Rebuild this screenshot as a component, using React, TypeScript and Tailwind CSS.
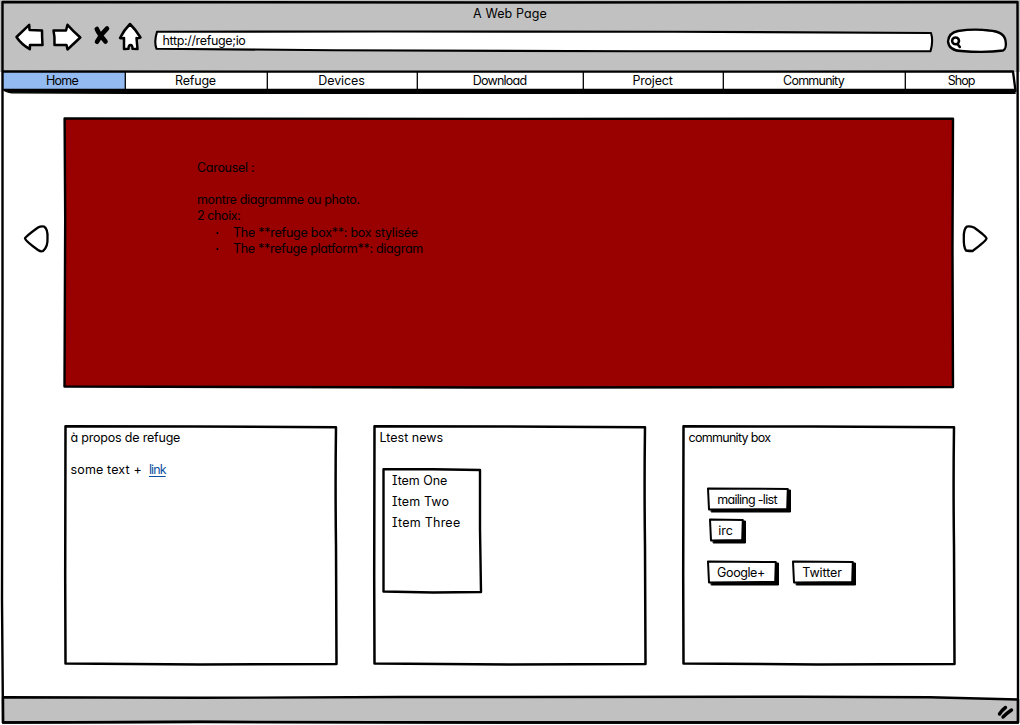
import React from "react";

type SketchProps = { d: string; fill?: string; width?: number };

/** Hand-drawn outline laid over its parent box; coordinates are local pixels. */
function Sketch({ d, fill = "none", width = 2.6 }: SketchProps) {
  return (
    <svg className="pointer-events-none absolute inset-0 size-full overflow-visible" aria-hidden="true">
      <path d={d} fill={fill} stroke="#000" strokeWidth={width} strokeLinejoin="round" strokeLinecap="round" />
    </svg>
  );
}

type IconProps = { d: string; className: string; fill?: string; width?: number };

function Icon({ d, className, fill = "#fff", width = 2.5 }: IconProps) {
  return (
    <svg className={`shrink-0 overflow-visible ${className}`} aria-hidden="true">
      <path d={d} fill={fill} stroke="#000" strokeWidth={width} strokeLinejoin="round" strokeLinecap="round" />
    </svg>
  );
}

const tabs = [
  { label: "Home", box: "w-[123px] bg-[#93baf1] pr-[3px]", text: "tracking-[-0.75px]" },
  { label: "Refuge", box: "w-[142px] bg-white pr-px", text: "tracking-[-0.2px]" },
  { label: "Devices", box: "w-[150px] bg-white pr-px", text: "tracking-[-0.1px]" },
  { label: "Download", box: "w-[166px] bg-white pr-px", text: "tracking-[-0.75px]" },
  { label: "Project", box: "w-[140px] bg-white pr-px", text: "tracking-[-0.2px]" },
  { label: "Community", box: "w-[182px] bg-white pr-px", text: "tracking-[-0.75px]" },
  { label: "Shop", box: "w-[112px] bg-white", text: "tracking-[-1px]" },
];

function Toolbar() {
  return (
    <header className="h-[72px] shrink-0 bg-[#c1c1c1] pt-[6px]">
      <h1 className="h-[15px] text-center tracking-[0.1px]">A Web Page</h1>
      <div className="flex h-[34px] pl-[15px] pt-px">
        <Icon className="mt-[2px] h-[26px] w-[28px]" d="M1.500 13 L14.200 .8 L14.500 6 L27 6.500 Q27 13 27.500 21 L15 21 L14.800 25.200 Q6 20 1.500 13Z" />
        <Icon className="ml-[9px] mt-[2px] h-[26px] w-[28px]" d="M1.500 6.500 L14 6.500 L15.500 .8 Q21 7 28.300 13.500 L15.500 25.500 L14.500 21 L2.500 21 Q3 13 1.500 6.500Z" />
        <Icon
          className="ml-[13px] mt-[4px] h-[20px] w-[17px]"
          fill="none"
          width={4.600}
          d="M3.800 3 Q6 8 12.500 15.500 M14 2.500 Q8 8 4 15.800"
        />
        <Icon
          className="ml-[9px] mt-[1px] h-[27px] w-[22px]"
          d="M11 1 Q17 7 21.500 14.500 Q18.500 15.500 17.500 15 L18.500 26 L13.500 25.800 Q13.500 22 11.500 22 Q9.500 22 9.500 25.800 L5 26 L5 15 Q2.500 15.500 1 15 Q5 7 11 1Z"
        />
        <div className="relative ml-[13px] mt-[9px] h-[20px] w-[779px] pl-[8.500px] pt-[2px]">
          <Sketch
            fill="#fff"
            width={2.100}
            d="M3 .7 L230 .5 L520 .7 L777 2 Q779.500 10 776.500 20.300 L480 20.300 L180 19.200 L2.500 17.800 Q-.2 11 3 .7Z"
          />
          <span className="relative tracking-[-0.35px]">http://refuge;io</span>
        </div>
        <div className="relative ml-[14px] mt-[7px] h-[24px] w-[60px]">
          <Sketch
            fill="#fff"
            width={2.300}
            d="M1 12.500 Q1.500 4 11 2 Q27 -.4 42 1.500 Q57 2.500 58.500 11.500 Q60 19.500 56 21.500 Q38 24 14 22 Q2 21.500 1 12.500Z"
          />
          <svg className="absolute left-[3px] top-[7px] size-[12px] overflow-visible" aria-hidden="true">
            <path d="M5.500 1.500 A3.400 3.400 0 1 0 5.600 1.500Z M7.500 8 L9.800 11" fill="none" stroke="#000" strokeWidth="2.600" strokeLinecap="round" />
          </svg>
        </div>
      </div>
    </header>
  );
}

function TabBar() {
  return (
    <nav className="relative flex h-[19px] shrink-0 pl-[2px]">
      {tabs.map((t) => (
        <div key={t.label} className={`h-[18px] shrink-0 pt-px text-center ${t.box}`}>
          <span className={t.text}>{t.label}</span>
        </div>
      ))}
      <Sketch width={2.300} d="M3 -.5 L600 -.3 L1013 -.5 L1015.500 19" />
      <Sketch width={1.300} d="M125.300 0 V18 M267.300 0 V18 M417.300 0 V18 M583.300 0 V18 M723.300 0 V18 M905.300 0 V18" />
      <Sketch width={1.400} fill="#000" d="M3 17.500 H1014 L1015 21.300 L600 21.200 L130 21.300 L12 20.800 Q6 20 3 17.500Z" />
    </nav>
  );
}

type CardProps = { title: string; titleClass: string; children?: React.ReactNode };

function Card({ title, titleClass, children }: CardProps) {
  return (
    <section className="relative h-[237px] w-[272px] pl-[5.500px] pt-[4px]">
      <Sketch
        width={2.500}
        d="M.5 .3 L130 .5 L271 1.200 Q270.200 60 271 120 L271.500 238 L135 238.500 L.5 237.500 L.2 150Z"
      />
      <h2 className={titleClass}>{title}</h2>
      {children}
    </section>
  );
}

function Button({ label, w, className }: { label: string; w: number; className: string }) {
  return (
    <button type="button" className={`relative block h-[26px] shrink-0 pb-px pr-[4px] text-center ${className}`}>
      <Sketch fill="#000" width={1} d={`M4.500 22 L${w - 3} 3 L${w - 0.5} 3 L${w - 0.5} 25 L4.500 25Z`} />
      <Sketch fill="#fff" width={2} d={`M1 1.500 L${w - 3.2} 2 L${w - 3.8} 22 L2 22.500Z`} />
      <span className="relative">{label}</span>
    </button>
  );
}

export default function App() {
  return (
    <div className="relative flex h-[725px] w-[1020px] flex-col overflow-hidden bg-white font-['Inter','Noto_Sans',sans-serif] text-[12.5px] leading-4 text-black [font-feature-settings:'cv11']">
      <Toolbar />
      <TabBar />

      <main className="flex grow flex-col">
        <div className="mt-[27px] flex h-[269px] items-center">
          <button type="button" aria-label="Previous" className="ml-[24px] mb-[29px] flex">
            <Icon width={2.300} className="h-[27px] w-[25px]" d="M1 13.500 Q1.500 11.500 14 2.500 Q17 .8 20 1.500 Q24 4 23.500 13 Q24 22 19 26 Q17 27 14 25 Q1.500 16 1 13.500Z" />
          </button>
          <div className="relative ml-[16px] h-[269px] w-[888px] bg-[#990000] pl-[132px] pt-[42px]">
            <Sketch width={2.400} d="M-.4 .5 L440 .9 L888 .7 L887.500 130 L888 269 L420 269.500 L-.5 268.500 L.2 100Z" />
            <p className="tracking-[-0.3px]">Carousel :</p>
            <p className="mt-4 tracking-[-0.36px]">montre diagramme ou photo.</p>
            <p className="tracking-[-0.4px]">2 choix:</p>
            <ul className="mt-px pl-[18px]">
              <li className="flex tracking-[-0.25px]"><span className="w-[18px] font-bold">·</span><span>The **refuge box**: box stylisée</span></li>
              <li className="flex tracking-[-0.3px]"><span className="w-[18px] font-bold">·</span><span>The **refuge platform**: diagram</span></li>
            </ul>
          </div>
          <button type="button" aria-label="Next" className="ml-[10px] mb-[29px] flex">
            <Icon width={2.300} className="h-[27px] w-[25px]" d="M23.500 13.500 Q23.500 11.500 11 2.500 Q7 .8 4 1.500 Q.5 4 .8 13 Q.5 22 3 25.500 Q6 26 9.500 26 Q23 16 23.500 13.500Z" />
          </button>
        </div>

        <div className="ml-[65px] mt-[39px] flex gap-[37px]">
          <Card title="à propos de refuge" titleClass="tracking-[-0.2px]">
            <p className="mt-4 flex gap-[7px]">
              <span className="tracking-[0.15px]">some text +</span>
              <a href="#link" className="tracking-[-0.9px] text-[#0b4fa0] underline underline-offset-2">link</a>
            </p>
          </Card>
          <Card title="Ltest news" titleClass="tracking-normal">
            <ul className="relative ml-[3.500px] mt-[23px] h-[123px] w-[98px] pl-[9px] pt-px leading-[21px] [font-feature-settings:'cv08','cv11']">
              <Sketch width={2.400} d="M.5 .3 L50 .3 L97 1 L97 60 L98 123 L50 123.500 L.5 122.500 L.5 60Z" />
              <li className="tracking-[-0.05px]">Item One</li>
              <li className="tracking-[0.1px]">Item Two</li>
              <li className="tracking-[0.25px]">Item Three</li>
            </ul>
          </Card>
          <Card title="community box" titleClass="tracking-[-0.7px]">
            <div className="ml-[18.500px] mt-[41px]">
              <Button label="mailing -list" w={84} className="w-[84px] tracking-[-0.7px]" />
              <Button label="irc" w={37} className="ml-[2px] mt-[5px] w-[37px] pr-[2px] tracking-[-0.1px]" />
              <div className="mt-[16px] flex gap-[13px]">
                <Button label="Google+" w={72} className="w-[72px] tracking-[-0.4px]" />
                <Button label="Twitter" w={64} className="w-[64px] tracking-[-0.1px]" />
              </div>
            </div>
          </Card>
        </div>
      </main>

      <footer className="relative flex h-[28px] shrink-0 items-center justify-end pr-[5px]">
        <Sketch fill="#c1c1c1" width={2.400} d="M3 .3 L200 .8 L400 0 L800 -.2 L930 .3 L1018 2.500 L1018 25.500 L500 25.500 L200 24.800 L3 25.500Z" />
        <svg className="relative h-[14px] w-[17px] overflow-visible" aria-hidden="true">
          <path d="M1.500 10 Q4 6 7.500 3.500 M5 13 Q9 9 13.500 6" fill="none" stroke="#000" strokeWidth="3.400" strokeLinecap="round" />
        </svg>
      </footer>

      <Sketch width={2.400} d="M2.500 2 L500 2.500 L1017.500 2 L1018 360 L1018 722.500 L500 722.500 L200 722 L3 722.500 L2 600 L2.500 300Z" />
    </div>
  );
}
